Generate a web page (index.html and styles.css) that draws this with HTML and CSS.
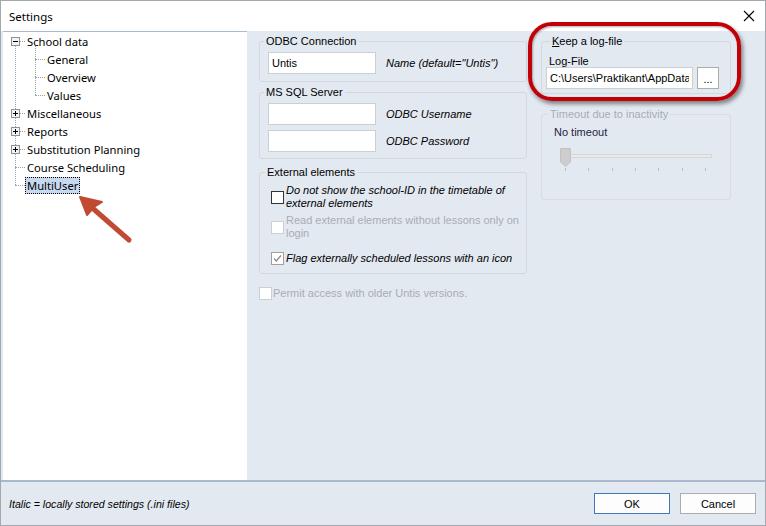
FILE: index.html
```html
<!DOCTYPE html>
<html lang="en">
<head>
    <meta charset="UTF-8">
    <title>Settings</title>
    <link rel="stylesheet" href="styles.css">
</head>
<body>

    <div class="window">
        <div class="titlebar">
            <span class="title">Settings</span>
            <svg class="close-icon" width="12" height="12" viewBox="0 0 12 12">
                <path d="M1 1L11 11M11 1L1 11" stroke="#000" stroke-width="1.1" fill="none"/>
            </svg>
        </div>

        <div class="main">
            <div class="tree">
                <ul class="tree-root">
                    <li>
                        <div class="node">
                            <svg class="twisty" width="9" height="9" viewBox="0 0 9 9">
                                <rect x="0.5" y="0.5" width="8" height="8" fill="#f3f3f3" stroke="#919191"/>
                                <path d="M2 4.5H7" stroke="#000"/>
                            </svg>
                            <span class="dots"></span>
                            <span class="label">School data</span>
                        </div>
                        <ul class="tree-children">
                            <li><div class="node child"><span class="dots"></span><span class="label">General</span></div></li>
                            <li><div class="node child"><span class="dots"></span><span class="label">Overview</span></div></li>
                            <li><div class="node child"><span class="dots"></span><span class="label">Values</span></div></li>
                        </ul>
                    </li>
                    <li>
                        <div class="node">
                            <svg class="twisty" width="9" height="9" viewBox="0 0 9 9">
                                <rect x="0.5" y="0.5" width="8" height="8" fill="#f3f3f3" stroke="#919191"/>
                                <path d="M2 4.5H7M4.5 2V7" stroke="#000"/>
                            </svg>
                            <span class="dots"></span>
                            <span class="label">Miscellaneous</span>
                        </div>
                    </li>
                    <li>
                        <div class="node">
                            <svg class="twisty" width="9" height="9" viewBox="0 0 9 9">
                                <rect x="0.5" y="0.5" width="8" height="8" fill="#f3f3f3" stroke="#919191"/>
                                <path d="M2 4.5H7M4.5 2V7" stroke="#000"/>
                            </svg>
                            <span class="dots"></span>
                            <span class="label">Reports</span>
                        </div>
                    </li>
                    <li>
                        <div class="node">
                            <svg class="twisty" width="9" height="9" viewBox="0 0 9 9">
                                <rect x="0.5" y="0.5" width="8" height="8" fill="#f3f3f3" stroke="#919191"/>
                                <path d="M2 4.5H7M4.5 2V7" stroke="#000"/>
                            </svg>
                            <span class="dots"></span>
                            <span class="label">Substitution Planning</span>
                        </div>
                    </li>
                    <li><div class="node leaf"><span class="dots"></span><span class="label">Course Scheduling</span></div></li>
                    <li><div class="node leaf"><span class="dots"></span><span class="label selected">MultiUser</span></div></li>
                </ul>
            </div>

            <div class="settings">
                <div class="col col-left">
                    <fieldset class="group group-odbc">
                        <legend>ODBC Connection</legend>
                        <div class="group-body">
                            <div class="field-row">
                                <input class="text-box" type="text" value="Untis">
                                <span class="hint">Name (default="Untis")</span>
                            </div>
                        </div>
                    </fieldset>

                    <fieldset class="group group-sql">
                        <legend>MS SQL Server</legend>
                        <div class="group-body">
                            <div class="field-row">
                                <input class="text-box" type="text">
                                <span class="hint">ODBC Username</span>
                            </div>
                            <div class="field-row">
                                <input class="text-box" type="text">
                                <span class="hint">ODBC Password</span>
                            </div>
                        </div>
                    </fieldset>

                    <fieldset class="group group-external">
                        <legend>External elements</legend>
                        <div class="group-body">
                            <div class="check-row">
                                <span class="check"></span>
                                <span class="check-text italic">Do not show the school-ID in the timetable of external elements</span>
                            </div>
                            <div class="check-row disabled">
                                <span class="check"></span>
                                <span class="check-text">Read external elements without lessons only on login</span>
                            </div>
                            <div class="check-row row-flag">
                                <span class="check checked">
                                    <svg width="11" height="11" viewBox="0 0 11 11">
                                        <path d="M2 5.5L4.3 8L9 2.5" stroke="#8a8a8a" stroke-width="1.2" fill="none"/>
                                    </svg>
                                </span>
                                <span class="check-text italic">Flag externally scheduled lessons with an icon</span>
                            </div>
                        </div>
                    </fieldset>

                    <div class="check-row disabled permit">
                        <span class="check"></span>
                        <span class="check-text">Permit access with older Untis versions.</span>
                    </div>
                </div>

                <div class="col col-right">
                    <fieldset class="group group-log">
                        <legend><u>K</u>eep a log-file</legend>
                        <div class="group-body">
                            <div class="field-label">Log-File</div>
                            <div class="file-row">
                                <input class="text-box path-box" type="text" value="C:\Users\Praktikant\AppData">
                                <button class="browse-btn">...</button>
                            </div>
                        </div>
                    </fieldset>

                    <fieldset class="group group-timeout">
                        <legend class="muted">Timeout due to inactivity</legend>
                        <div class="group-body">
                            <div class="timeout-value">No timeout</div>
                            <div class="slider">
                                <div class="slider-track"></div>
                                <svg class="slider-thumb" width="11" height="19" viewBox="0 0 11 19">
                                    <path d="M0.5 0.5H10.5V14L5.5 18.5L0.5 14Z" fill="#cdcdcd" stroke="#c2c2c2"/>
                                </svg>
                                <div class="ticks">
                                    <span></span><span></span><span></span><span></span><span></span><span></span><span></span>
                                </div>
                            </div>
                        </div>
                    </fieldset>
                </div>
            </div>
        </div>

        <div class="footer">
            <span class="footer-note">Italic = locally stored settings (.ini files)</span>
            <div class="buttons">
                <button class="btn btn-default">OK</button>
                <button class="btn">Cancel</button>
            </div>
        </div>

        <!-- annotations drawn on top of the dialog -->
        <div class="highlight-ring"></div>
        <svg class="pointer-arrow" width="60" height="56" viewBox="0 0 60 56">
            <path d="M12 13L52 48" stroke="#c24a32" stroke-width="5" stroke-linecap="round"/>
            <path d="M3 5L25 10L17 15L10 23Z" fill="#c24a32" stroke="#c24a32" stroke-width="2" stroke-linejoin="round"/>
        </svg>
    </div>

</body>
</html>
```

FILE: styles.css
```css
* {
    box-sizing: border-box;
}

body {
    margin: 0;
    font-family: "Liberation Sans", Arial, sans-serif;
    font-size: 11px;
    color: #000;
}

.window {
    position: relative;
    width: 766px;
    height: 526px;
    border: 1px solid #a3a8ae;
    background: #e3e9f1;
    display: flex;
    flex-direction: column;
    overflow: hidden;
}

.titlebar {
    height: 30px;
    background: #fff;
    display: flex;
    align-items: center;
    justify-content: space-between;
    padding: 0 10px 0 8px;
    flex-shrink: 0;
}

.title {
    font-family: "Noto Sans", sans-serif;
    font-size: 11.5px;
}

.main {
    flex: 1;
    display: flex;
    min-height: 0;
}

/* tree */

.tree {
    width: 244px;
    margin-left: 2px;
    background: #fff;
    border-top: 1px solid #a9b9cf;
    font-family: "Noto Sans", sans-serif;
    font-size: 11.2px;
}

.tree ul {
    list-style: none;
    margin: 0;
    padding: 0;
}

.tree-root {
    position: relative;
}

.tree-root::before {
    content: "";
    position: absolute;
    left: 12px;
    top: 9px;
    height: 144px;
    border-left: 1px dotted #a0a0a0;
}

.tree-children {
    position: relative;
}

.tree-children::before {
    content: "";
    position: absolute;
    left: 32px;
    top: -4px;
    height: 49px;
    border-left: 1px dotted #a0a0a0;
}

.node {
    height: 18px;
    display: flex;
    align-items: center;
}

.twisty {
    position: relative;
    margin-left: 8px;
    flex-shrink: 0;
}

.node .dots {
    width: 5px;
    height: 0;
    border-top: 1px dotted #a0a0a0;
}

.node.leaf .dots {
    margin-left: 12px;
    width: 10px;
}

.node.child .dots {
    margin-left: 32px;
    width: 10px;
}

.label {
    padding: 0 1px;
    height: 17px;
    line-height: 16px;
    border: 1px solid transparent;
    white-space: nowrap;
}

.label.selected {
    background: #c7d8ef;
    border: 1px dotted #000;
}

/* settings area */

.settings {
    flex: 1;
    display: flex;
    gap: 14px;
    padding: 4px 0 0 12px;
}

.col-left {
    width: 268px;
}

.col-right {
    width: 190px;
}

.group {
    margin: 0;
    padding: 0;
    border: 1px solid #d3d8de;
    border-radius: 3px;
    min-width: 0;
}

.group legend {
    margin-left: 4px;
    padding: 0 2px;
    line-height: 13px;
}

.muted {
    color: #a8adb3;
}

.group-odbc .group-body {
    padding: 4px 0 7px 8px;
}

.group-sql {
    margin-top: 4px;
}

.group-sql .group-body {
    padding: 4px 0 6px 8px;
}

.group-external {
    margin-top: 7px;
}

.group-external legend {
    margin-left: 5px;
}

.group-external .group-body {
    padding: 5px 0 8px 11px;
}

.field-row {
    display: flex;
    align-items: center;
}

.field-row + .field-row {
    margin-top: 5px;
}

.text-box {
    width: 108px;
    height: 22px;
    border: 1px solid #cbd0d5;
    background: #fff;
    padding: 0 3px;
    font-family: "Liberation Sans", Arial, sans-serif;
    font-size: 11px;
    color: #000;
    outline: none;
}

.hint {
    margin-left: 10px;
    font-style: italic;
}

.check-row {
    display: flex;
    align-items: center;
    line-height: 13px;
}

.check-row + .check-row {
    margin-top: 4px;
}

.check-row.row-flag {
    margin-top: 12px;
}

.check {
    width: 13px;
    height: 13px;
    border: 1px solid #333;
    background: #fff;
    flex-shrink: 0;
    display: flex;
    align-items: center;
    justify-content: center;
}

.check.checked {
    border-color: #a0a0a0;
}

.check-text {
    margin-left: 2px;
    width: 240px;
}

.italic {
    font-style: italic;
}

.check-row.disabled {
    color: #a8adb3;
}

.check-row.disabled .check {
    border-color: #cbd0d6;
}

.check-row.permit {
    margin-top: 13px;
}

.permit .check-text {
    width: auto;
    margin-left: 1px;
}

/* right column */

.group-log legend {
    margin-left: 8px;
}

.group-log .group-body {
    padding: 7px 0 4px 4px;
}

.field-label {
    margin-left: 3px;
    line-height: 12px;
}

.file-row {
    display: flex;
    gap: 4px;
}

.path-box {
    width: 147px;
}

.browse-btn {
    width: 22px;
    height: 22px;
    padding: 0;
    border: 1px solid #adadad;
    background: #fff;
    font-family: "Liberation Sans", Arial, sans-serif;
    font-size: 11px;
    line-height: 22px;
}

.group-timeout {
    margin-top: 14px;
    border-color: #d9dde2;
}

.group-timeout legend {
    margin-left: 6px;
}

.group-timeout .group-body {
    padding: 5px 0 28px 12px;
}

.timeout-value {
    color: #1e1d3f;
    line-height: 13px;
}

.slider {
    position: relative;
    margin: 9px 0 0 6px;
    padding-top: 6px;
    width: 152px;
}

.slider-track {
    margin-left: 5px;
    height: 4px;
    border: 1px solid #d6d6d6;
    background: #e8eaec;
}

.slider-thumb {
    position: absolute;
    left: 0;
    top: 0;
}

.ticks {
    display: flex;
    justify-content: space-between;
    margin: 10px 0 0 5px;
    width: 141px;
}

.ticks span {
    width: 1px;
    height: 3px;
    background: #bdbdbd;
}

/* footer */

.footer {
    height: 45px;
    flex-shrink: 0;
    border-top: 2px solid #a9b8cc;
    display: flex;
    align-items: center;
    justify-content: space-between;
    padding: 0 9px 0 8px;
}

.footer-note {
    font-style: italic;
    font-size: 10.6px;
}

.buttons {
    display: flex;
    gap: 10px;
}

.btn {
    width: 76px;
    height: 21px;
    padding: 0;
    background: #fdfdfd;
    border: 1px solid #adadad;
    font-family: "Liberation Sans", Arial, sans-serif;
    font-size: 11px;
    color: #000;
}

.btn-default {
    border-color: #3d7bb8;
}

/* annotations */

.highlight-ring {
    position: absolute;
    left: 527px;
    top: 21px;
    width: 213px;
    height: 79px;
    border: 4px solid #c20008;
    border-radius: 24px;
    box-shadow: 2px 3px 4px rgba(0, 0, 0, 0.45), inset 1px 1px 2px rgba(0, 0, 0, 0.3);
}

.pointer-arrow {
    position: absolute;
    left: 76px;
    top: 191px;
}
```
